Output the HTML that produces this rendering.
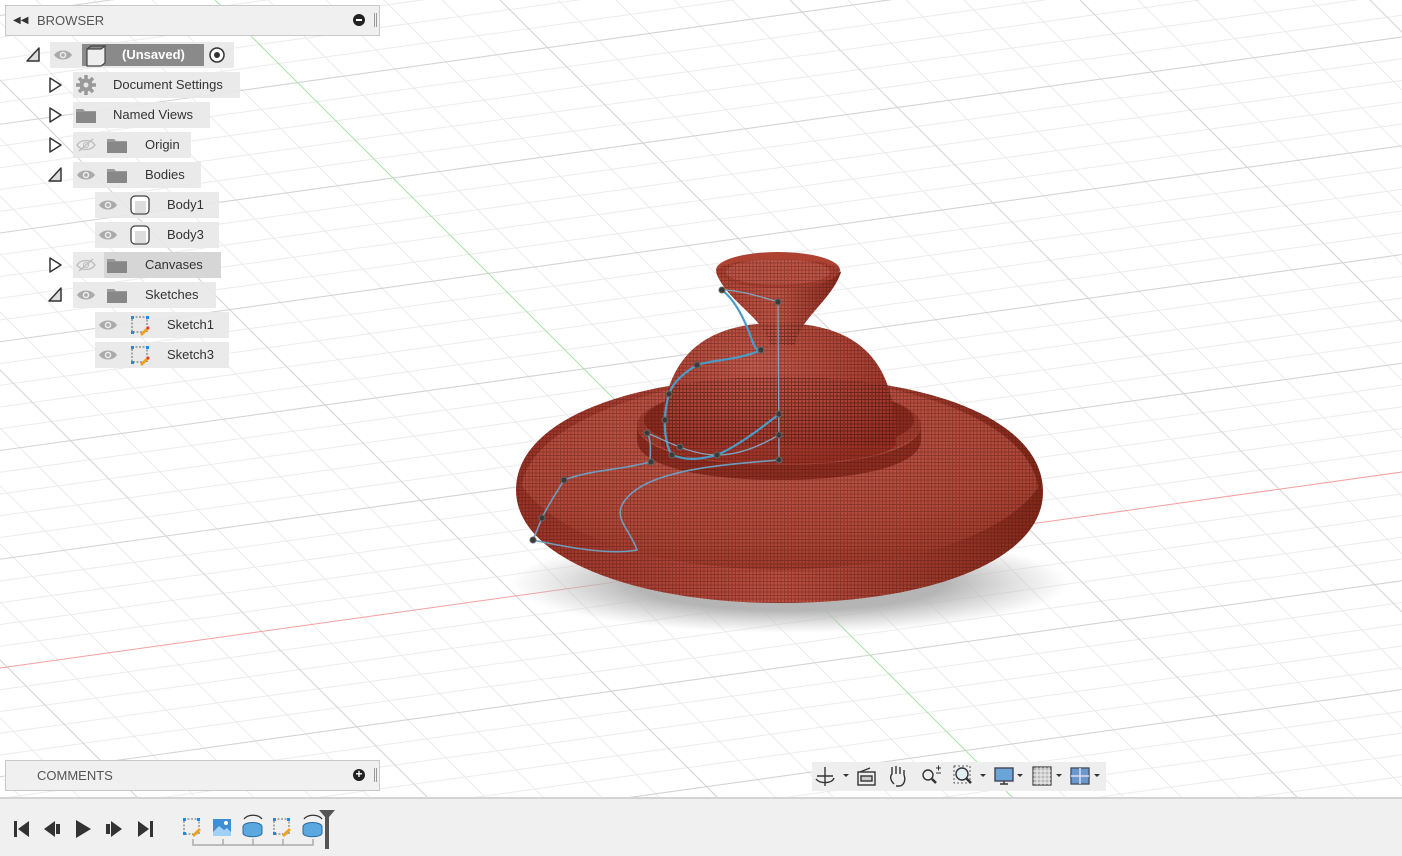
<!DOCTYPE html>
<html><head><meta charset="utf-8"><style>
*{margin:0;padding:0;box-sizing:border-box}
html,body{width:1402px;height:856px;overflow:hidden}
body{background:#fff;font-family:"Liberation Sans",sans-serif;position:relative}
svg{overflow:hidden}
#vp{position:absolute;left:0;top:0}
.hdr{position:absolute;left:5px;width:375px;height:31px;background:#f0f0f0;border:1px solid #c9c9c9;font-size:13px;color:#555;line-height:29px}
.row{position:absolute;height:26px;background:rgba(232,232,232,.9);font-size:13px;color:#333;line-height:26px}
.row span{position:absolute;top:0}
#tl{position:absolute;left:0;top:797px;width:1402px;height:59px;background:#f0f0f0;border-top:2px solid #d4d4d4}
#nav{position:absolute;left:812px;top:762px;width:294px;height:29px;background:#eee}
</style></head><body>
<svg id="vp" width="1402" height="856" viewBox="0 0 1402 856">
<defs>
<pattern id="tx" patternUnits="userSpaceOnUse" width="3.5" height="3.5">
<path d="M0 0.5H3.5M0.5 0V3.5" stroke="#3a0f0a" stroke-opacity=".35" stroke-width="0.9"/>
</pattern>
<radialGradient id="sh" cx=".5" cy=".5" r=".5"><stop offset=".55" stop-color="#b5b5b5"/><stop offset="1" stop-color="#c0c0c0" stop-opacity="0"/></radialGradient>
<linearGradient id="side" x1="0" x2="1"><stop offset="0" stop-color="#9a3326"/><stop offset=".5" stop-color="#bb4e41"/><stop offset="1" stop-color="#842819"/></linearGradient>
<radialGradient id="top" cx=".45" cy=".3" r=".75"><stop offset="0" stop-color="#c25a4c"/><stop offset=".7" stop-color="#b14839"/><stop offset="1" stop-color="#9c3728"/></radialGradient>
<radialGradient id="dome" cx=".4" cy=".3" r=".75"><stop offset="0" stop-color="#c65d4f"/><stop offset="1" stop-color="#992f22"/></radialGradient>
<linearGradient id="fun" x1="0" x2="1"><stop offset="0" stop-color="#b04536"/><stop offset=".5" stop-color="#bf5546"/><stop offset="1" stop-color="#8a2a1d"/></linearGradient>
</defs>
<rect width="1402" height="856" fill="#fff"/>
<path fill="none" stroke="#ececec" stroke-width="1" d="M-892 0l856 856M-834 0l856 856M-776 0l856 856M-718 0l856 856M-602 0l856 856M-544 0l856 856M-486 0l856 856M-428 0l856 856M-312 0l856 856M-254 0l856 856M-196 0l856 856M-138 0l856 856M-22 0l856 856M36 0l856 856M94 0l856 856M152 0l856 856M268 0l856 856M326 0l856 856M384 0l856 856M442 0l856 856M558 0l856 856M616 0l856 856M674 0l856 856M732 0l856 856M848 0l856 856M906 0l856 856M964 0l856 856M1022 0l856 856M1138 0l856 856M1196 0l856 856M1254 0l856 856M1312 0l856 856
M0 37.25l1402 -196M0 59l1402 -196M0 80.75l1402 -196M0 102.5l1402 -196M0 146l1402 -196M0 167.75l1402 -196M0 189.5l1402 -196M0 211.25l1402 -196M0 254.75l1402 -196M0 276.5l1402 -196M0 298.25l1402 -196M0 320l1402 -196M0 363.5l1402 -196M0 385.25l1402 -196M0 407l1402 -196M0 428.75l1402 -196M0 472.25l1402 -196M0 494l1402 -196M0 515.75l1402 -196M0 537.5l1402 -196M0 581l1402 -196M0 602.75l1402 -196M0 624.5l1402 -196M0 646.25l1402 -196M0 689.75l1402 -196M0 711.5l1402 -196M0 733.25l1402 -196M0 755l1402 -196M0 798.5l1402 -196M0 820.25l1402 -196M0 842l1402 -196M0 863.75l1402 -196M0 907.25l1402 -196M0 929l1402 -196M0 950.75l1402 -196M0 972.5l1402 -196M0 1016l1402 -196M0 1037.75l1402 -196M0 1059.5l1402 -196"/>
<path fill="none" stroke="#d4d4d4" stroke-width="1.1" d="M-660 0l856 856M-370 0l856 856M-80 0l856 856M500 0l856 856M790 0l856 856M1080 0l856 856M1370 0l856 856
M0 15.5l1402 -196M0 124.25l1402 -196M0 233l1402 -196M0 341.75l1402 -196M0 450.5l1402 -196M0 559.25l1402 -196M0 776.75l1402 -196M0 885.5l1402 -196M0 994.25l1402 -196"/>
<line x1="0" y1="668" x2="1402" y2="472" stroke="#f4a0a0" stroke-width="1"/>
<line x1="215" y1="0" x2="1071" y2="856" stroke="#a4e6a4" stroke-width="1"/>
<ellipse cx="790" cy="583" rx="280" ry="50" fill="url(#sh)"/>
<g>
<path d="M516,490 C516,560 640,603 780,603 C930,603 1043,560 1043,492 C1043,420 930,377 780,377 C630,377 516,420 516,490Z" fill="url(#side)"/>
<path d="M522,486 C528,430 640,380 780,377 C930,380 1032,430 1038,488 C1000,540 900,568 780,570 C660,568 560,540 522,486Z" fill="url(#top)"/>
<ellipse cx="779" cy="425" rx="142" ry="40" fill="#a53d30"/>
<path d="M637,425 C637,450 700,465 779,465 C860,465 921,450 921,425 L921,440 C921,465 860,480 779,480 C700,480 637,465 637,440Z" fill="#8e2d20"/>
<ellipse cx="779" cy="420" rx="135" ry="34" fill="#8a2b1e"/>
<path d="M661,445 C660,360 700,323 778,323 C858,323 897,360 896,445 C880,470 680,470 661,445Z" fill="url(#dome)"/>
<path d="M716,272 C725,300 765,318 770,345 L795,345 C800,318 832,300 841,272Z" fill="url(#fun)"/>
<ellipse cx="778" cy="270" rx="62" ry="18" fill="#ad4233"/>
<ellipse cx="778" cy="272" rx="52" ry="13" fill="#bd5446"/>
<path d="M516,490 C516,560 640,603 780,603 C930,603 1043,560 1043,492 C1043,420 930,377 780,377 C630,377 516,420 516,490Z" fill="url(#tx)"/>
<path d="M661,445 C660,360 700,323 778,323 C858,323 897,360 896,445Z" fill="url(#tx)"/>
<path d="M716,272 C725,300 765,318 770,345 L795,345 C800,318 832,300 841,272 C841,255 716,255 716,272Z" fill="url(#tx)"/>
</g>
<g fill="none" stroke-linecap="round">
<path d="M722,290 C735,300 745,320 752,340 C755,350 760,352 761,350 C740,360 710,360 697,365 C680,375 672,385 669,394 C666,405 665,412 665,420 C664,435 668,450 672,455 C690,462 705,458 717,455 C740,445 765,425 779,414" stroke="#4a9cc8" stroke-width="2.2"/>
<path d="M722,290 C740,290 765,298 778,302 L779,460" stroke="#7fa5c0" stroke-width="1.3"/>
<path d="M647,433 C652,440 650,455 650,462 C620,470 590,470 564,480 C555,495 548,505 542,518 C538,528 535,535 533,540 C570,548 610,555 637,550 C630,530 615,520 622,505 C640,470 720,465 779,460" stroke="#6f9cbc" stroke-width="1.6"/>
<path d="M647,433 C665,440 690,455 717,455 C745,455 770,440 779,435" stroke="#7fa5c0" stroke-width="1.3"/>
</g>
<g fill="#3a3a3a" stroke="#666" stroke-width="1">
<circle cx="722" cy="290" r="3"/><circle cx="778" cy="302" r="3"/><circle cx="761" cy="350" r="3"/><circle cx="697" cy="365" r="3"/><circle cx="669" cy="394" r="3"/><circle cx="665" cy="420" r="3"/><circle cx="647" cy="433" r="3"/><circle cx="680" cy="447" r="3"/><circle cx="672" cy="455" r="3"/><circle cx="717" cy="455" r="3"/><circle cx="779" cy="414" r="3"/><circle cx="779" cy="435" r="3"/><circle cx="779" cy="460" r="3"/><circle cx="651" cy="462" r="3"/><circle cx="564" cy="480" r="3"/><circle cx="542" cy="518" r="3"/><circle cx="533" cy="540" r="3"/>
</g>
</svg>

<div class="hdr" style="top:5px"><span style="position:absolute;left:7px;font-size:10px;color:#333">&#9664;&#9664;</span><span style="position:absolute;left:31px">BROWSER</span><span style="position:absolute;left:347px;top:8px;width:12px;height:12px;border-radius:50%;background:#222"><i style="position:absolute;left:3px;top:5px;width:6px;height:2px;background:#fff"></i></span><span style="position:absolute;left:368px;top:7px;width:3px;height:14px;border-left:1px solid #999;border-right:1px solid #999"></span></div>

<div class="row" style="left:50px;top:42px;width:184px"></div>
<div style="position:absolute;left:82px;top:44px;width:122px;height:22px;background:#8a8a8a;color:#fff;font-weight:bold;font-size:13px;line-height:22px"><span style="position:absolute;left:40px">(Unsaved)</span></div>
<div class="row" style="left:73px;top:72px;width:167px"><span style="left:40px">Document Settings</span></div>
<div class="row" style="left:73px;top:102px;width:137px"><span style="left:40px">Named Views</span></div>
<div class="row" style="left:73px;top:132px;width:118px"><span style="left:72px">Origin</span></div>
<div class="row" style="left:73px;top:162px;width:128px"><span style="left:72px">Bodies</span></div>
<div class="row" style="left:95px;top:192px;width:124px"><span style="left:72px">Body1</span></div>
<div class="row" style="left:95px;top:222px;width:124px"><span style="left:72px">Body3</span></div>
<div class="row" style="left:73px;top:252px;width:148px"><div style="position:absolute;left:31px;top:0;width:117px;height:26px;background:#d6d6d6"></div><span style="left:72px">Canvases</span></div>
<div class="row" style="left:73px;top:282px;width:143px"><span style="left:72px">Sketches</span></div>
<div class="row" style="left:95px;top:312px;width:134px"><span style="left:72px">Sketch1</span></div>
<div class="row" style="left:95px;top:342px;width:134px"><span style="left:72px">Sketch3</span></div>

<svg style="position:absolute;left:0;top:0" width="400" height="380">
<defs><g id="eye"><path d="M-9,0 C-5,-6 5,-6 9,0 C5,6 -5,6 -9,0Z" fill="#aaa"/><circle r="3.3" fill="#ececec"/><circle r="1.8" fill="#aaa"/></g>
<g id="eyeh"><path d="M-9,0 C-5,-6 5,-6 9,0 C5,6 -5,6 -9,0Z" fill="none" stroke="#bbb" stroke-width="1.3"/><circle r="2.5" fill="none" stroke="#bbb"/><line x1="-7" y1="6" x2="7" y2="-6" stroke="#bbb" stroke-width="1.3"/></g>
<g id="fold"><path d="M-10,-7 h7 l2,2 h11 v12 h-20Z" fill="#9a9a9a"/><rect x="-10" y="-4" width="20" height="11" fill="#888"/></g>
<g id="body"><rect x="-9" y="-9" width="18" height="18" rx="4" fill="#fff" stroke="#444" stroke-width="1.3"/><rect x="-5" y="-4" width="11" height="12" fill="#ddd"/></g>
<g id="sk"><rect x="-8" y="-8" width="15" height="15" fill="none" stroke="#666" stroke-dasharray="2 1.5"/><g fill="#1e8ae6"><rect x="-9" y="-9" width="3" height="3"/><rect x="6" y="-9" width="3" height="3"/><rect x="-9" y="6" width="3" height="3"/></g><path d="M0,9 L7,2 L9,4 L2,11Z" fill="#f0a020"/><circle cx="8" cy="3" r="1.5" fill="#e33"/></g></defs>
<g fill="#ddd" stroke="#333" stroke-width="1.5" stroke-linejoin="round">
<path d="M27,61 L39,48 L39,61Z"/>
<path d="M50,78 L61,85 L50,92Z" fill="#fff"/>
<path d="M50,108 L61,115 L50,122Z" fill="#fff"/>
<path d="M50,138 L61,145 L50,152Z" fill="#fff"/>
<path d="M49,181 L61,168 L61,181Z"/>
<path d="M50,258 L61,265 L50,272Z" fill="#fff"/>
<path d="M49,301 L61,288 L61,301Z"/>
</g>
<use href="#eye" x="63" y="55"/>
<path d="M87,49 h14 l4,-3 v17 l-4,3 h-14Z" fill="#eee" stroke="#444" stroke-width="1.2"/><path d="M87,49 l4,-3 h14" fill="none" stroke="#444" stroke-width="1.2"/>
<circle cx="217" cy="55" r="7" fill="#fff" stroke="#333" stroke-width="1.5"/><circle cx="217" cy="55" r="3" fill="#333"/>
<g transform="translate(86,85)" fill="#999"><circle r="6.5"/><g stroke="#999" stroke-width="3.5"><line x1="-10" y1="0" x2="10" y2="0"/><line x1="0" y1="-10" x2="0" y2="10"/><line x1="-7" y1="-7" x2="7" y2="7"/><line x1="-7" y1="7" x2="7" y2="-7"/></g><circle r="2.5" fill="#e8e8e8"/></g>
<use href="#fold" x="86" y="116"/>
<use href="#eyeh" x="86" y="145"/><use href="#fold" x="117" y="146"/>
<use href="#eye" x="86" y="175"/><use href="#fold" x="117" y="176"/>
<use href="#eye" x="108" y="205"/><use href="#body" x="140" y="205"/>
<use href="#eye" x="108" y="235"/><use href="#body" x="140" y="235"/>
<use href="#eyeh" x="86" y="265"/><use href="#fold" x="117" y="266"/>
<use href="#eye" x="86" y="295"/><use href="#fold" x="117" y="296"/>
<use href="#eye" x="108" y="325"/><use href="#sk" x="140" y="325"/>
<use href="#eye" x="108" y="355"/><use href="#sk" x="140" y="355"/>
</svg>

<div class="hdr" style="top:760px"><span style="position:absolute;left:31px">COMMENTS</span><span style="position:absolute;left:347px;top:8px;width:12px;height:12px;border-radius:50%;background:#222;color:#fff;font-size:12px;line-height:11px;text-align:center;font-weight:bold">+</span><span style="position:absolute;left:368px;top:7px;width:3px;height:14px;border-left:1px solid #999;border-right:1px solid #999"></span></div>

<div id="nav"></div>
<svg style="position:absolute;left:812px;top:762px" width="294" height="29">
<g fill="none" stroke="#333" stroke-width="1.4">
<path d="M13,5 V24 M5,14 H21 M4,17 C8,22 20,22 22,16"/><path d="M31,12 l3,3 l3,-3Z" fill="#333" stroke="none"/>
<rect x="46" y="10" width="17" height="13"/><rect x="49" y="14" width="11" height="5" fill="#ccc"/><path d="M48,10 l10,-4"/>
<path d="M82,22 C78,18 78,14 80,12 V7 M80,12 V5 M84,12 V4 M88,12 V5 M92,13 V8 M92,13 C94,18 92,23 88,24 H84"/>
<circle cx="116" cy="13" r="5"/><path d="M120,17 l4,4" stroke-width="2.5"/><path d="M124,6 h5 M126.5,3.5 v5 M124,11 h5" stroke-width="1"/>
<circle cx="150" cy="12" r="6" fill="#e0eef5"/><path d="M154,16 l5,5" stroke-width="2.5"/><rect x="142" y="4" width="16" height="17" stroke-dasharray="2 2" stroke-width="0.8"/><path d="M168,12 l3,3 l3,-3Z" fill="#333" stroke="none"/>
<rect x="183" y="6" width="18" height="13" fill="#6aa4d8" stroke="#445"/><path d="M188,22 h8 M192,19 v3"/><path d="M205,12 l3,3 l3,-3Z" fill="#333" stroke="none"/>
<rect x="221" y="5" width="18" height="18" fill="#bbb" stroke="#555"/><path d="M225,5v18M229,5v18M233,5v18M237,5v18M221,9h18M221,13h18M221,17h18M221,21h18" stroke="#fff" stroke-width=".7"/><path d="M244,12 l3,3 l3,-3Z" fill="#333" stroke="none"/>
<rect x="259" y="6" width="18" height="16" fill="#6a98cc" stroke="#456"/><path d="M268,6v16M259,14h18" stroke="#dde" stroke-width="1.5"/><path d="M282,12 l3,3 l3,-3Z" fill="#333" stroke="none"/>
</g>
</svg>

<div id="tl"></div>
<svg style="position:absolute;left:0;top:797px" width="400" height="59">
<g fill="#333">
<rect x="14" y="24" width="3" height="16"/><path d="M29,24 V40 L18,32Z"/>
<path d="M55,24 V40 L44,32Z"/><rect x="56" y="27" width="4" height="10"/>
<path d="M76,23 V41 L91,32Z"/>
<rect x="106" y="27" width="4" height="10"/><path d="M111,24 V40 L122,32Z"/>
<path d="M138,24 V40 L149,32Z"/><rect x="150" y="24" width="3" height="16"/>
</g>
<g>
<rect x="184" y="22" width="15" height="15" fill="none" stroke="#666" stroke-dasharray="2 1.5"/><g fill="#1e8ae6"><rect x="183" y="21" width="3" height="3"/><rect x="197" y="21" width="3" height="3"/><rect x="183" y="35" width="3" height="3"/></g><path d="M192,38 L199,31 L201,33 L194,40Z" fill="#f0a020"/>
<rect x="213" y="22" width="18" height="17" fill="#3a8fd6"/><path d="M213,35 l6,-6 l5,4 l3,-2 l4,4 v4 h-18Z" fill="#9fd0f5"/><circle cx="226" cy="26" r="2" fill="#fff"/>
<path d="M243,30 C243,24 262,24 262,30 V36 C262,41 243,41 243,36Z" fill="#5ba7e0" stroke="#2a6a9e"/><path d="M244,22 C248,17 258,17 262,22" fill="none" stroke="#333" stroke-width="1.3"/>
<rect x="274" y="22" width="15" height="15" fill="none" stroke="#666" stroke-dasharray="2 1.5"/><g fill="#1e8ae6"><rect x="273" y="21" width="3" height="3"/><rect x="287" y="21" width="3" height="3"/><rect x="273" y="35" width="3" height="3"/></g><path d="M282,38 L289,31 L291,33 L284,40Z" fill="#f0a020"/>
<path d="M303,30 C303,24 322,24 322,30 V36 C322,41 303,41 303,36Z" fill="#5ba7e0" stroke="#2a6a9e"/><path d="M304,22 C308,17 318,17 322,22" fill="none" stroke="#333" stroke-width="1.3"/>
<path d="M193,42 v6 h120 v-6 M223,42v6 M253,42v6 M283,42v6" fill="none" stroke="#aaa" stroke-width="1.5"/>
<path d="M319,13 h16 l-6,7 v32 h-4 v-32Z" fill="#555"/>
</g>
</svg>
</body></html>
